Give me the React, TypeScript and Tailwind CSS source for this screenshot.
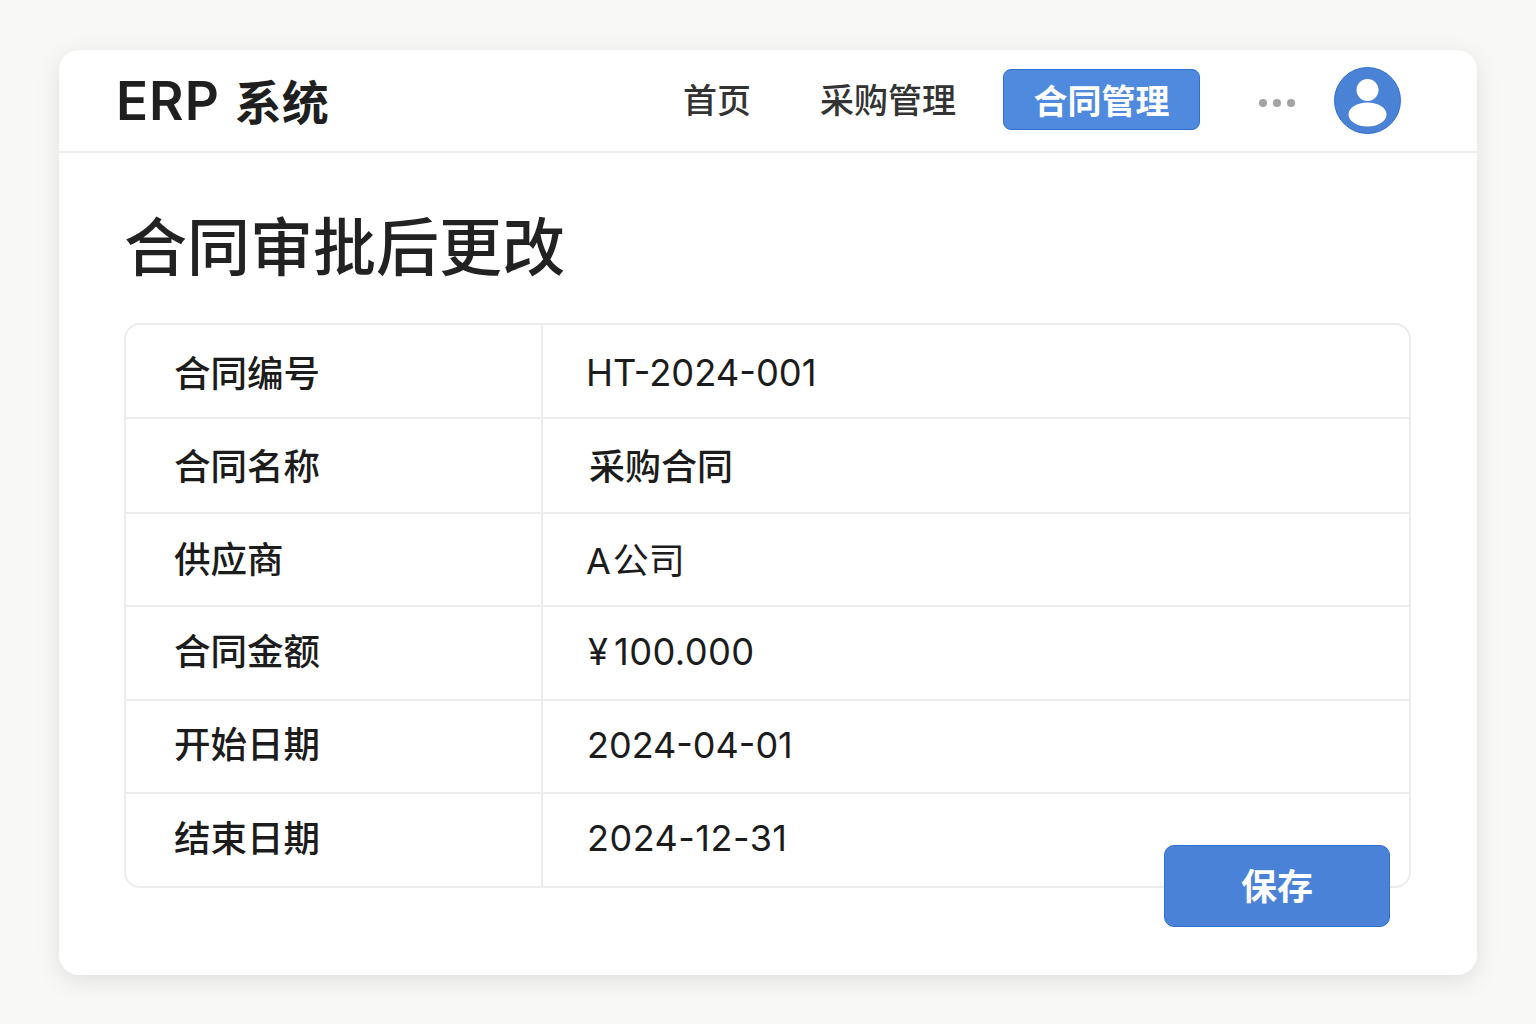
import React from "react";

const font = { fontFamily: '"Inter", "Noto Sans CJK SC", sans-serif' };

const rows = [
  { label: "合同编号", value: <span>HT-2024-001</span>, row: "flex h-[92px]", l: "pt-[6px]", v: "pt-[4px] text-[36.3px]" },
  { label: "合同名称", value: <span className="ml-[3px] font-medium">采购合同</span>, row: "flex h-[95px] border-t-2 border-[#ececec]", l: "pt-[4px]", v: "pt-[2px] text-[36px]" },
  { label: "供应商", value: <span>A<span className="ml-[2px]">公司</span></span>, row: "flex h-[93px] border-t-2 border-[#ececec]", l: "pt-[2px]", v: "pt-[2px] text-[36px]" },
  { label: "合同金额", value: <span className="ml-[2px]">¥<span className="ml-[6px] tracking-[0.4px]">100.000</span></span>, row: "flex h-[94px] border-t-2 border-[#ececec]", l: "pb-[2px]", v: "pb-[2px] text-[36.3px]" },
  { label: "开始日期", value: <span className="ml-[1px]">2024-04-01</span>, row: "flex h-[93px] border-t-2 border-[#ececec]", l: "pb-[2px]", v: "pb-[4px] text-[36px]" },
  { label: "结束日期", value: <span className="ml-[1px] tracking-[0.5px]">2024-12-31</span>, row: "flex h-[94px] border-t-2 border-[#ececec]", l: "pb-[2px]", v: "pb-[4px] text-[36px]" },
];

export default function App() {
  return (
    <div
      className="w-[1536px] h-[1024px] bg-[#f8f8f6] pt-[50px] pl-[59px] overflow-hidden"
      style={font}
    >
      <div className="relative w-[1418px] h-[925px] bg-white rounded-[20px] shadow-[0_6px_24px_rgba(0,0,0,0.10)]">
        <header className="h-[103px] flex items-center border-b-2 border-[#ececec] pl-[57px] pr-[76px]">
          <div className="flex items-baseline font-semibold text-[#1f1f1f] leading-none pt-[2px]">
            <span className="text-[53px] tracking-[1px]">ERP</span>
            <span className="ml-[15px] text-[47px]">系统</span>
          </div>
          <nav className="ml-auto flex items-center text-[34px] text-[#333333] font-medium">
            <span className="mr-[69px]">首页</span>
            <span className="mr-[47px]">采购管理</span>
            <span className="w-[197px] h-[61px] -mt-[2px] pt-[3px] rounded-[8px] bg-[#4f8adf] border border-[#2f6fd0] text-white font-semibold flex items-center justify-center">
              合同管理
            </span>
          </nav>
          <div className="ml-[59px] flex gap-[6px] items-center mt-[4px]">
            <span className="w-[8px] h-[8px] rounded-full bg-[#a3a3a3]" />
            <span className="w-[8px] h-[8px] rounded-full bg-[#a3a3a3]" />
            <span className="w-[8px] h-[8px] rounded-full bg-[#a3a3a3]" />
          </div>
          <svg className="ml-[39px]" width="67" height="67" viewBox="0 0 67 67">
            <circle cx="33.5" cy="33.5" r="33" fill="#4a82d6" stroke="#2f6fd0" />
            <circle cx="33.5" cy="23" r="11" fill="#ffffff" />
            <ellipse cx="33.5" cy="47.5" rx="19" ry="12" fill="#ffffff" />
          </svg>
        </header>

        <main className="pl-[65px] pr-[66px]">
          <h1 className="mt-[61px] h-[66px] text-[63px] leading-[66px] font-medium text-[#222222]">
            合同审批后更改
          </h1>
          <div className="mt-[43px] border-2 border-[#ececec] rounded-[16px] overflow-hidden bg-white">
            {rows.map((r) => (
              <div key={r.label} className={r.row}>
                <div className={"w-[417px] shrink-0 border-r-2 border-[#ececec] pl-[48px] flex items-center text-[36.5px] font-medium text-[#1c1c1c] " + r.l}>
                  {r.label}
                </div>
                <div className={"pl-[43px] flex items-center text-[#1c1c1c] " + r.v}>
                  {r.value}
                </div>
              </div>
            ))}
          </div>
        </main>

        <button className="absolute left-[1105px] top-[795px] w-[226px] h-[82px] pt-[2px] rounded-[10px] bg-[#4a82d8] border border-[#2f6fd0] text-white text-[36px] font-semibold flex items-center justify-center">
          保存
        </button>
      </div>
    </div>
  );
}
